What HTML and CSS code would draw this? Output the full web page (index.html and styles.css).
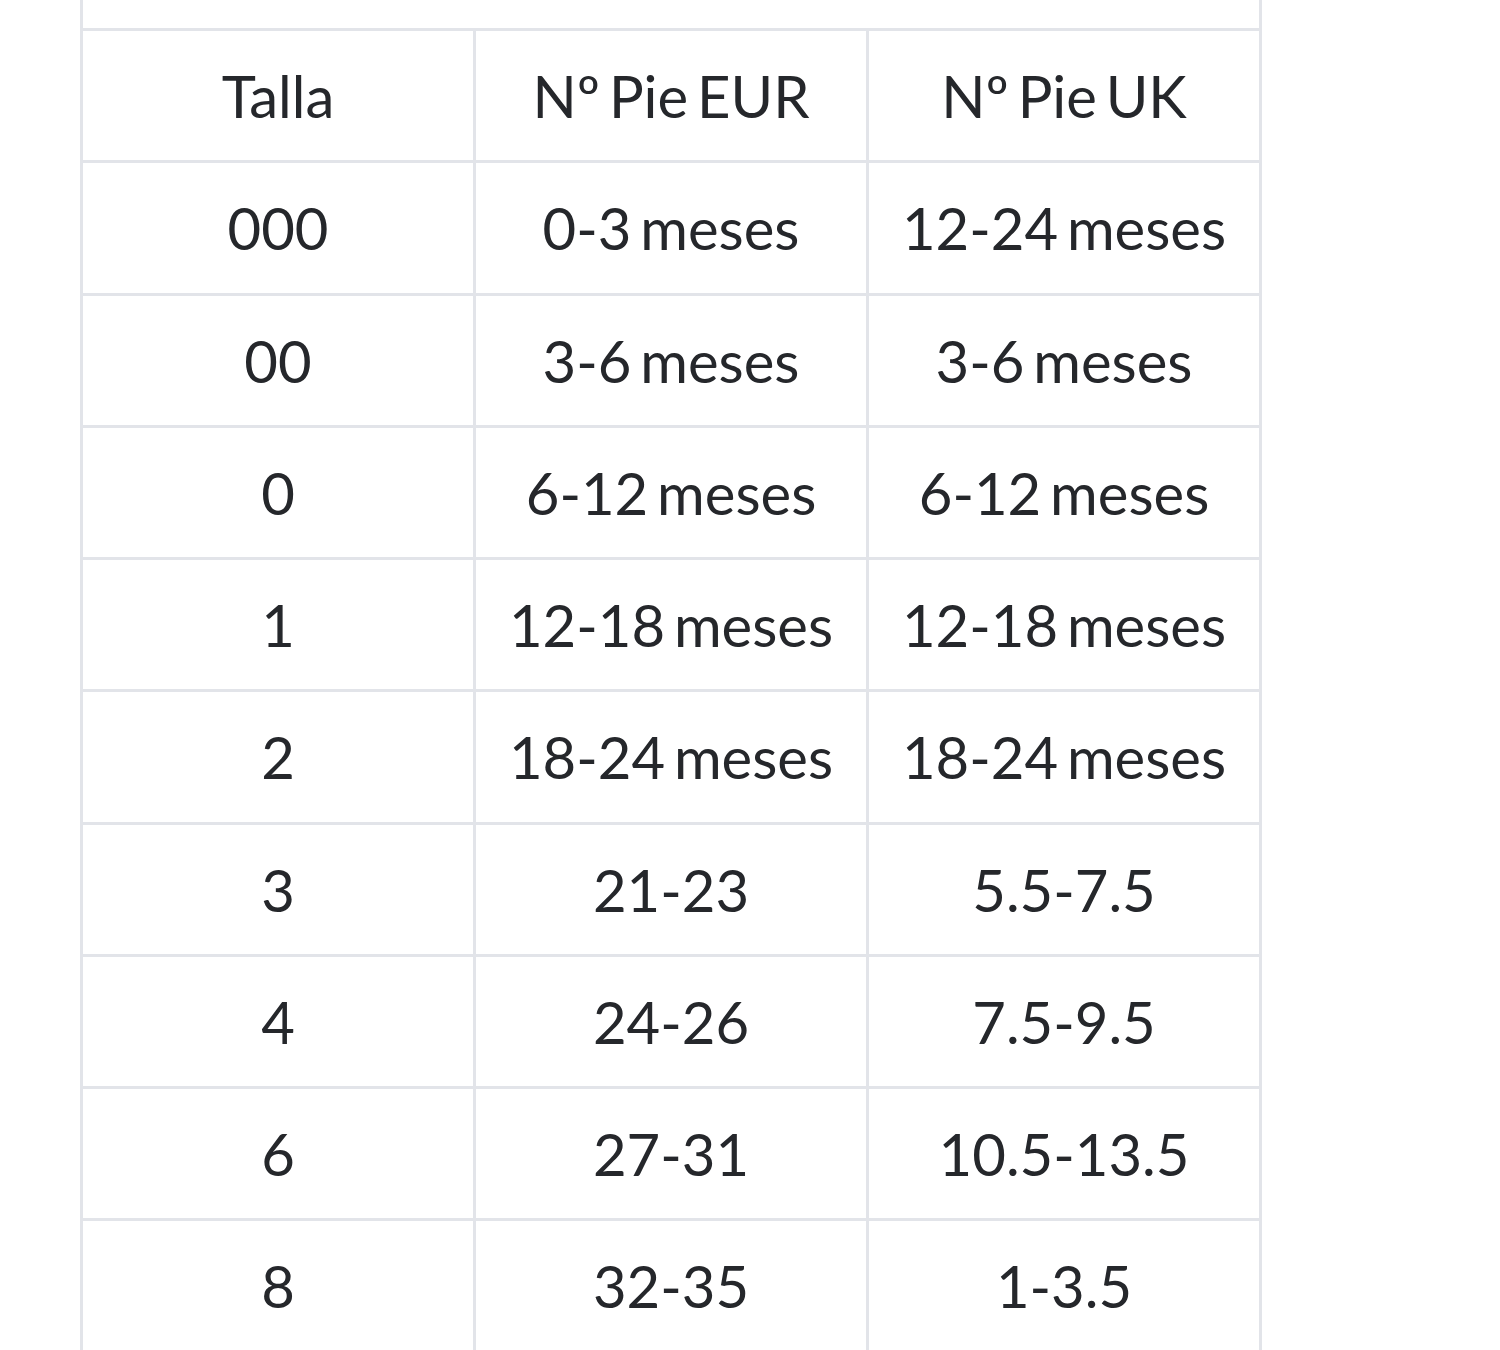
FILE: index.html
```html
<!DOCTYPE html>
<html lang="es">
<head>
<meta charset="utf-8">
<title>Tallas</title>
<link rel="stylesheet" href="styles.css">
</head>
<body>
<div class="page">
  <div class="grid">
    <div class="cell top"></div>
    <div class="cell">Talla</div><div class="cell">Nº Pie EUR</div><div class="cell">Nº Pie UK</div>
    <div class="cell">000</div><div class="cell">0-3 meses</div><div class="cell">12-24 meses</div>
    <div class="cell">00</div><div class="cell">3-6 meses</div><div class="cell">3-6 meses</div>
    <div class="cell">0</div><div class="cell">6-12 meses</div><div class="cell">6-12 meses</div>
    <div class="cell">1</div><div class="cell">12-18 meses</div><div class="cell">12-18 meses</div>
    <div class="cell">2</div><div class="cell">18-24 meses</div><div class="cell">18-24 meses</div>
    <div class="cell">3</div><div class="cell">21-23</div><div class="cell">5.5-7.5</div>
    <div class="cell">4</div><div class="cell">24-26</div><div class="cell">7.5-9.5</div>
    <div class="cell">6</div><div class="cell">27-31</div><div class="cell">10.5-13.5</div>
    <div class="cell">8</div><div class="cell">32-35</div><div class="cell">1-3.5</div>
  </div>
</div>
</body>
</html>
```
FILE: styles.css
```css
html, body {
  margin: 0;
  padding: 0;
  background: #ffffff;
  overflow: hidden;
}
.page {
  padding-left: 80px;
  height: 1350px;
  overflow: hidden;
}
.grid {
  width: 1182px;
  display: grid;
  grid-template-columns: repeat(3, 1fr);
  grid-template-rows: 28px;
  grid-auto-rows: 129.25px;
  gap: 3px;
  padding: 0 3px 3px 3px;
  box-sizing: border-box;
  background: #e2e4e9;
}
.cell {
  background: #ffffff;
  display: flex;
  align-items: center;
  justify-content: center;
  font-family: Lato, "Liberation Sans", sans-serif;
  font-size: 58px;
  word-spacing: -6px;
  color: #25272b;
}
.top {
  grid-column: 1 / -1;
}
```
